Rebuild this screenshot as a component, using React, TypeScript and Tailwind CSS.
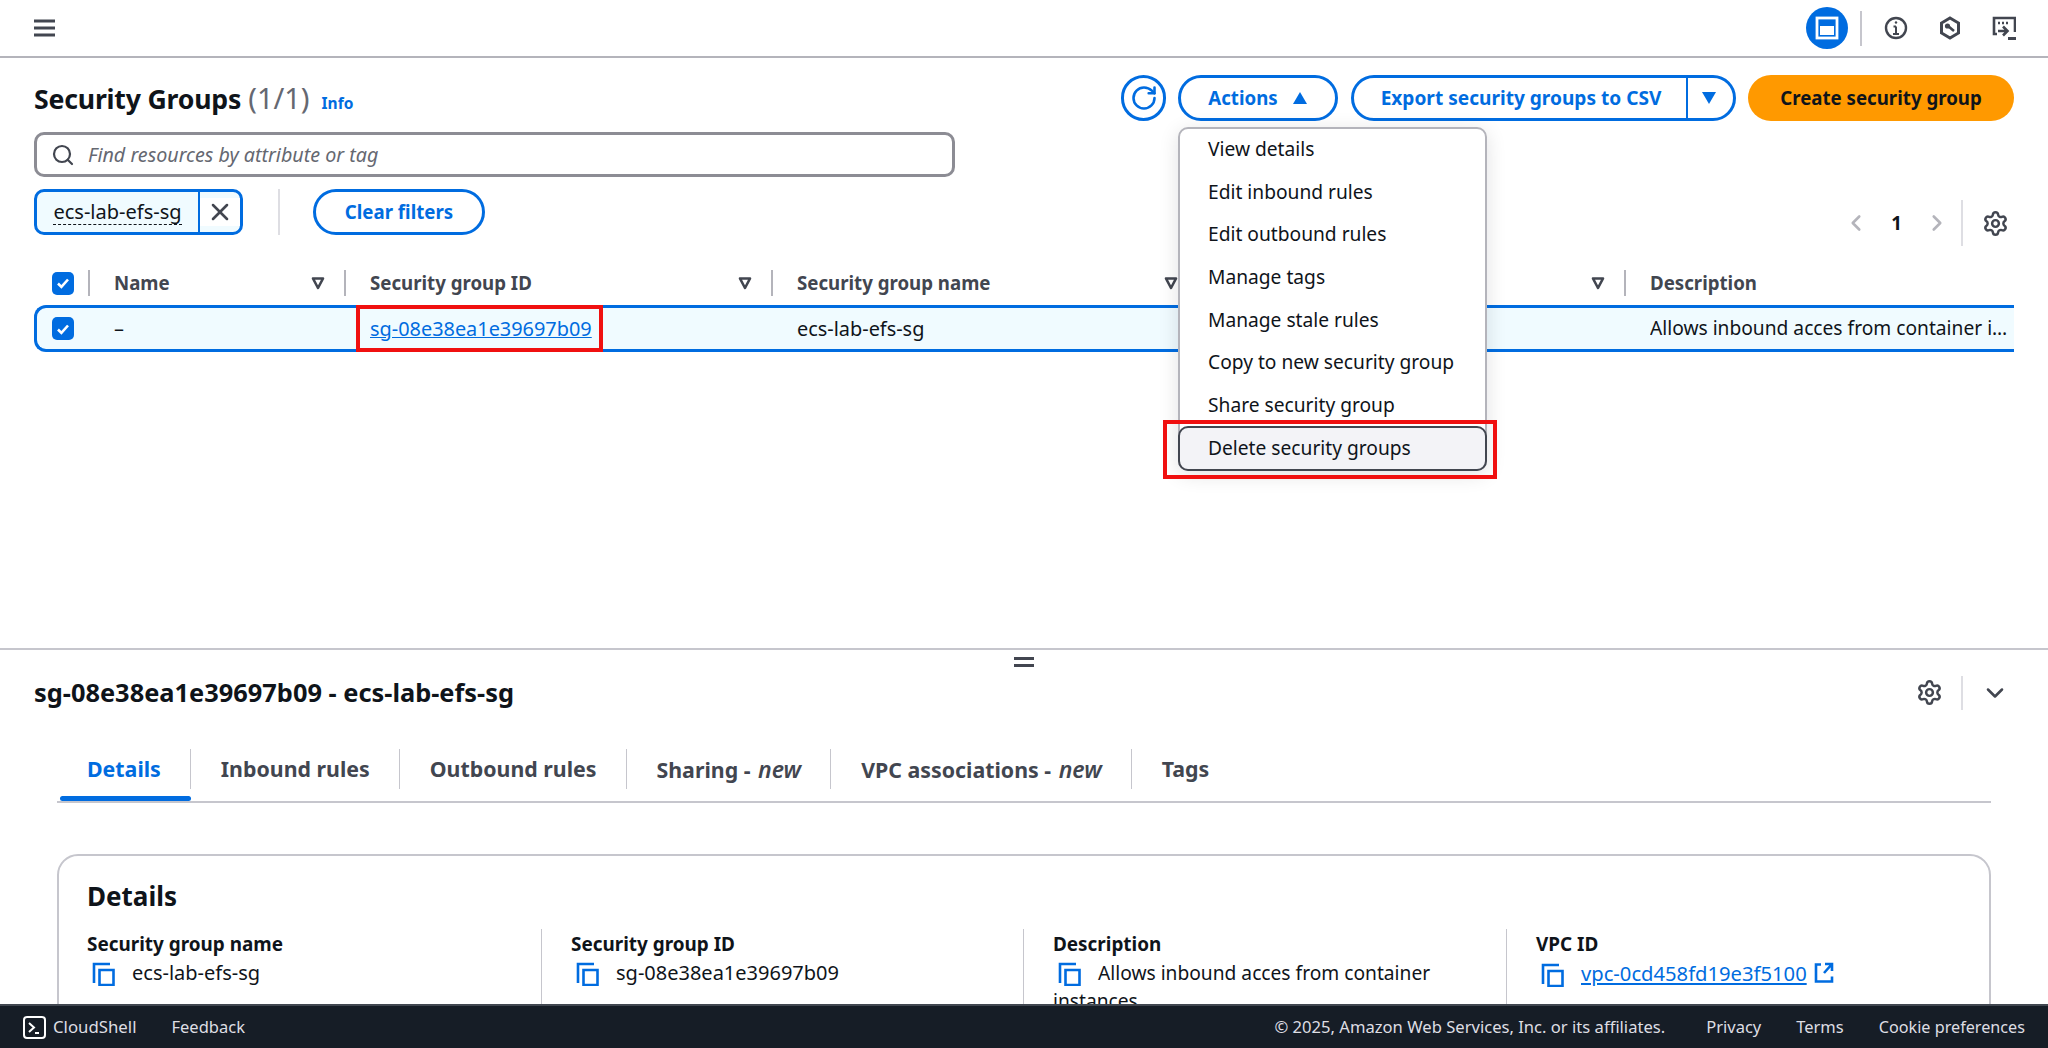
import React from 'react';
import { RotateCw, Settings, Search, X, ChevronLeft, ChevronRight, ChevronDown } from 'lucide-react';

const menuItems = [
  'View details',
  'Edit inbound rules',
  'Edit outbound rules',
  'Manage tags',
  'Manage stale rules',
  'Copy to new security group',
  'Share security group',
];

const tabs = [
  { label: 'Details' },
  { label: 'Inbound rules' },
  { label: 'Outbound rules' },
  { label: 'Sharing - ', tag: 'new' },
  { label: 'VPC associations - ', tag: 'new' },
  { label: 'Tags' },
];

const FilterIcon = () => (
  <svg width="14" height="14" viewBox="0 0 14 14" fill="none" stroke="#424650" strokeWidth="2.6" strokeLinejoin="round" className="shrink-0">
    <path d="M2 2.5h10L7 12z" />
  </svg>
);

const CheckBox = () => (
  <span className="flex h-[23px] w-[22px] items-center justify-center rounded-[5px] bg-[#006ce0]">
    <svg width="16" height="16" viewBox="0 0 16 16" fill="none" stroke="#fff" strokeWidth="2.6">
      <path d="M3 8.5l3.4 3.4L13 4.5" />
    </svg>
  </span>
);

const CopyIcon = () => (
  <svg width="24" height="24" viewBox="0 0 24 24" fill="none" stroke="#006ce0" strokeWidth="2.6" className="mr-[16px] inline-block align-[-6px]">
    <path d="M2 21V2h16" />
    <path d="M7.5 8h14v15h-14z" />
  </svg>
);

const HeadCell = ({ label }: { label?: string }) => (
  <div className="flex h-[26px] items-center justify-between border-r-2 border-[#b4b4bb] pl-[24px] pr-[19px] font-bold text-[#424650]">
    <span>{label}</span>
    <FilterIcon />
  </div>
);

const DetailCol = ({ label, children, last }: { label: string; children: React.ReactNode; last?: boolean }) => (
  <div className={`h-[120px] pr-[20px] ${last ? '' : 'border-r border-[#c6c6cd]'}`}>
    <div className="text-[18.9px] font-bold leading-[30px] text-[#0f141a]">{label}</div>
    <div className="leading-[28px]">{children}</div>
  </div>
);

const App: React.FC = () => {
  return (
    <div className="relative flex h-screen flex-col overflow-hidden bg-white font-['Noto_Sans',sans-serif] text-[20px] text-[#0f141a]">
      {/* top bar */}
      <header className="flex h-[58px] shrink-0 items-center justify-between border-b-2 border-[#b4b4bb] pl-[34px] pr-[32px]">
        <svg width="22" height="18" viewBox="0 0 22 18" fill="none" stroke="#424650" strokeWidth="2.8">
          <path d="M0 2h21M0 9h21M0 16h21" />
        </svg>
        <div className="flex items-center">
          <span className="flex h-[42px] w-[42px] items-center justify-center rounded-full bg-[#006ce0]">
            <svg width="24" height="24" viewBox="0 0 24 24" fill="none">
              <rect x="2" y="2" width="20" height="20" stroke="#fff" strokeWidth="2.8" />
              <rect x="5" y="10" width="14" height="9" fill="#fff" />
            </svg>
          </span>
          <span className="ml-[12px] mr-[22px] h-[35px] w-[2px] bg-[#c6c6cd]" />
          <svg width="24" height="24" viewBox="0 0 24 24" fill="none" stroke="#424650" strokeWidth="2.4">
            <circle cx="12" cy="12" r="10" />
            <path d="M12 10.5V18M9 18h6M9.5 10.5H12" strokeWidth="2" />
            <circle cx="12" cy="6.5" r="1.2" fill="#424650" stroke="none" />
          </svg>
          <svg width="24" height="24" viewBox="0 0 24 24" fill="none" stroke="#424650" strokeWidth="3" className="ml-[30px]">
            <path d="M12 2l8.5 5v10L12 22l-8.5-5V7z" />
            <path d="M10 10l6 5" strokeWidth="2.6" />
            <circle cx="9.5" cy="10" r="2.6" fill="#424650" stroke="none" />
          </svg>
          <svg width="24" height="24" viewBox="0 0 24 24" fill="none" stroke="#424650" strokeWidth="2.6" className="ml-[30px]">
            <path d="M5 18H2V2h21v14" />
            <path d="M6 7h2M10 7h2M14 7h2" strokeWidth="2.4" />
            <path d="M6 15h9M11 10.5l4.5 4.5-4.5 4.5" />
            <path d="M16 22.5h8" strokeWidth="3" />
          </svg>
        </div>
      </header>

      {/* list section */}
      <section className="h-[590px] shrink-0 px-[34px] pt-[17px]">
        <div className="flex h-[46px] items-center justify-between">
          <div className="flex items-baseline">
            <h1 className="text-[26.67px] font-bold tracking-[-0.2px] text-[#0f141a]">Security Groups</h1>
            <span className="ml-[7px] text-[29px] text-[#656871]">(1/1)</span>
            <span className="ml-[12px] text-[15.5px] font-bold text-[#006ce0]">Info</span>
          </div>
          <div className="flex items-center text-[18.67px] font-bold text-[#006ce0]">
            <span className="flex h-[46px] w-[45px] items-center justify-center rounded-full border-[3px] border-[#006ce0]">
              <RotateCw size={28} strokeWidth={2.2} />
            </span>
            <div className="relative ml-[12px]">
              <span className="flex h-[46px] w-[160px] items-center justify-center gap-[14px] rounded-full border-[3px] border-[#006ce0]">
                Actions
                <svg width="16" height="14" viewBox="0 0 16 14" fill="#006ce0">
                  <path d="M8 1l7 12H1z" />
                </svg>
              </span>
              {/* open dropdown */}
              <div className="absolute left-0 top-[52px] z-20 w-[309px] rounded-[10px] border-2 border-[#b4b4bb] bg-white text-[19.2px] font-normal text-[#0f141a] shadow-[0_4px_20px_rgba(0,7,22,0.12)]">
                <div className="-mt-[1px]">
                  {menuItems.map(item => (
                    <div key={item} className="flex h-[42.7px] items-center pl-[28px]">
                      {item}
                    </div>
                  ))}
                </div>
                <div className="relative -mx-[2px] -mb-[2px] -mt-[1px] flex h-[45px] items-center rounded-[10px] border-[2.5px] border-[#424650] bg-[#f3f3f7] pl-[28px]">
                  Delete security groups
                  <span className="absolute -bottom-[10px] -left-[17px] -right-[12px] -top-[8px] border-4 border-[#f01010]" />
                </div>
              </div>
            </div>
            <div className="ml-[13px] flex h-[46px] w-[385px] items-center rounded-full border-[3px] border-[#006ce0]">
              <span className="flex h-full w-[334px] items-center justify-center border-r-2 border-[#006ce0] pl-[2px] text-[19.1px]">
                Export security groups to CSV
              </span>
              <span className="flex flex-1 items-center justify-center pr-[3px]">
                <svg width="16" height="14" viewBox="0 0 16 14" fill="#006ce0">
                  <path d="M1 1h14L8 13z" />
                </svg>
              </span>
            </div>
            <span className="ml-[12px] flex h-[46px] w-[266px] items-center justify-center rounded-full bg-[#ff9900] text-[#0f141a]">
              Create security group
            </span>
          </div>
        </div>

        <div className="mt-[11px] flex h-[45px] w-[921px] items-center rounded-[10px] border-[3px] border-[#8c8c94] pl-[14px]">
          <Search size={24} strokeWidth={2.2} className="text-[#424650]" />
          <span className="ml-[13px] text-[19.7px] italic text-[#656871]">Find resources by attribute or tag</span>
        </div>

        <div className="mt-[12px] flex h-[57px] items-start justify-between">
          <div className="flex items-center">
            <div className="flex h-[46px] w-[209px] items-center overflow-hidden rounded-[10px] border-[3px] border-[#006ce0] bg-[#f0fbff]">
              <span className="flex h-full w-[163px] items-center justify-center border-r-2 border-[#006ce0]">
                <span className="border-b border-dashed border-[#0f141a] leading-[24px]">ecs-lab-efs-sg</span>
              </span>
              <span className="flex flex-1 items-center justify-center bg-white text-[#424650]">
                <X size={28} strokeWidth={2.2} />
              </span>
            </div>
            <span className="ml-[35px] h-[46px] w-[2px] bg-[#dedee3]" />
            <span className="ml-[33px] flex h-[46px] w-[172px] items-center justify-center rounded-full border-[3px] border-[#006ce0] text-[18.67px] font-bold text-[#006ce0]">
              Clear filters
            </span>
          </div>
          <div className="mr-[5px] mt-[11px] flex h-[46px] items-center">
            <ChevronLeft size={26} strokeWidth={2.4} className="text-[#b4b4bb]" />
            <span className="mx-[22px] text-[18.67px] font-bold">1</span>
            <ChevronRight size={26} strokeWidth={2.4} className="text-[#b4b4bb]" />
            <span className="ml-[11px] mr-[19px] h-[46px] w-[2px] bg-[#dedee3]" />
            <Settings size={27} strokeWidth={2.2} className="text-[#424650]" />
          </div>
        </div>

        {/* table, clipped at the content edge */}
        <div className="mt-[24px] grid h-[26px] grid-cols-[56px_256px_427px_426px_427px_388px] items-center text-[18.67px]">
          <div className="flex h-[26px] items-center border-r-2 border-[#b4b4bb] pl-[18px]">
            <CheckBox />
          </div>
          <HeadCell label="Name" />
          <HeadCell label="Security group ID" />
          <HeadCell label="Security group name" />
          <HeadCell />
          <div className="flex h-[26px] items-center pl-[24px] font-bold text-[#424650]">Description</div>
        </div>
        <div className="mt-[9px] grid h-[47px] grid-cols-[53px_256px_427px_426px_427px_388px] items-center rounded-l-[12px] border-y-[3px] border-l-[3px] border-[#006ce0] bg-[#f0fbff] text-[19.9px]">
          <div className="pl-[15px]">
            <CheckBox />
          </div>
          <div className="pl-[24px]">–</div>
          <div className="relative flex items-center self-stretch pl-[24px]">
            <a className="text-[#006ce0] underline">sg-08e38ea1e39697b09</a>
            <span className="absolute -bottom-[3px] -top-[3px] left-[10px] w-[247px] border-4 border-[#f01010]" />
          </div>
          <div className="pl-[24px]">ecs-lab-efs-sg</div>
          <div />
          <div className="overflow-hidden pl-[24px] text-[19.2px]">
            <div className="w-[369px] truncate">Allows inbound acces from container instances</div>
          </div>
        </div>
      </section>

      {/* detail split panel */}
      <section className="relative min-h-0 flex-1 overflow-hidden border-t-2 border-[#c6c6cd]">
        <span className="absolute left-[1014px] top-[7px] flex w-[20px] flex-col gap-[4px]">
          <span className="h-[3px] bg-[#424650]" />
          <span className="h-[3px] bg-[#424650]" />
        </span>
        <div className="flex h-[85px] items-center justify-between pl-[34px] pr-[39px]">
          <h2 className="text-[25.4px] font-bold">sg-08e38ea1e39697b09 - ecs-lab-efs-sg</h2>
          <div className="flex h-[34px] items-center">
            <Settings size={27} strokeWidth={2.2} className="text-[#424650]" />
            <span className="ml-[18px] mr-[18px] h-[34px] w-[2px] bg-[#dedee3]" />
            <ChevronDown size={28} strokeWidth={2.2} className="text-[#424650]" />
          </div>
        </div>
        <div className="ml-[57px] mr-[57px] mt-[14px] flex h-[54px] items-start border-b-2 border-[#c6c6cd] text-[21.33px] text-[#424650]">
          {tabs.map((tab, i) => (
            <div key={tab.label} className="relative flex h-[40px] items-center font-bold">
              <span className={`pl-[30px] pr-[29px] ${i === 0 ? 'text-[#006ce0]' : ''}`}>
                {tab.label}
                {tab.tag && <em className="ml-[2px] text-[23px] font-semibold">{tab.tag}</em>}
              </span>
              {i < tabs.length - 1 && <span className="h-[40px] w-px bg-[#c6c6cd]" />}
              {i === 0 && <span className="absolute bottom-[-12px] left-[3px] right-0 h-[5px] rounded-full bg-[#006ce0]" />}
            </div>
          ))}
        </div>
        <div className="ml-[57px] mr-[57px] mt-[51px] rounded-[21px] border-2 border-[#c6c6cd] px-[28px] pt-[22px]">
          <h3 className="text-[26px] font-bold leading-[36px]">Details</h3>
          <div className="mt-[15px] grid grid-cols-[455px_453px_454px_1fr] gap-x-[29px]">
            <DetailCol label="Security group name">
              <span className="pl-[5px]"><CopyIcon />ecs-lab-efs-sg</span>
            </DetailCol>
            <DetailCol label="Security group ID">
              <span className="pl-[5px]"><CopyIcon />sg-08e38ea1e39697b09</span>
            </DetailCol>
            <DetailCol label="Description">
              <span className="pl-[5px] text-[19.2px]"><CopyIcon />Allows inbound acces from container instances</span>
            </DetailCol>
            <DetailCol label="VPC ID" last>
              <span className="pl-[5px]"><CopyIcon /><a className="text-[20.2px] text-[#006ce0] underline">vpc-0cd458fd19e3f5100</a></span>
              <svg width="20" height="22" viewBox="0 0 20 22" fill="none" stroke="#006ce0" strokeWidth="2.6" className="ml-[7px] inline-block align-[-3px]">
                <path d="M7 2.5H2v17h16v-5M11 2h7v7M18 2l-8 9" />
              </svg>
            </DetailCol>
          </div>
        </div>
      </section>

      {/* console footer */}
      <footer className="flex h-[44px] shrink-0 items-center justify-between border-t-2 border-[#414750] bg-[#161d26] pl-[23px] pr-[23px] text-[16.5px] text-[#dedee3]">
        <div className="flex items-center">
          <svg width="23" height="23" viewBox="0 0 23 23" fill="none" stroke="#fff" strokeWidth="2">
            <rect x="1" y="1" width="21" height="21" rx="3" />
            <path d="M6 7l5 4.5L6 16M12 17h4" />
          </svg>
          <span className="ml-[7px] text-[16.8px]">CloudShell</span>
          <span className="ml-[35px]">Feedback</span>
        </div>
        <div className="flex items-center">
          <span className="text-[16.6px]">© 2025, Amazon Web Services, Inc. or its affiliates.</span>
          <span className="ml-[41px]">Privacy</span>
          <span className="ml-[35px]">Terms</span>
          <span className="ml-[35px] text-[16.2px]">Cookie preferences</span>
        </div>
      </footer>
    </div>
  );
};

export default App;
